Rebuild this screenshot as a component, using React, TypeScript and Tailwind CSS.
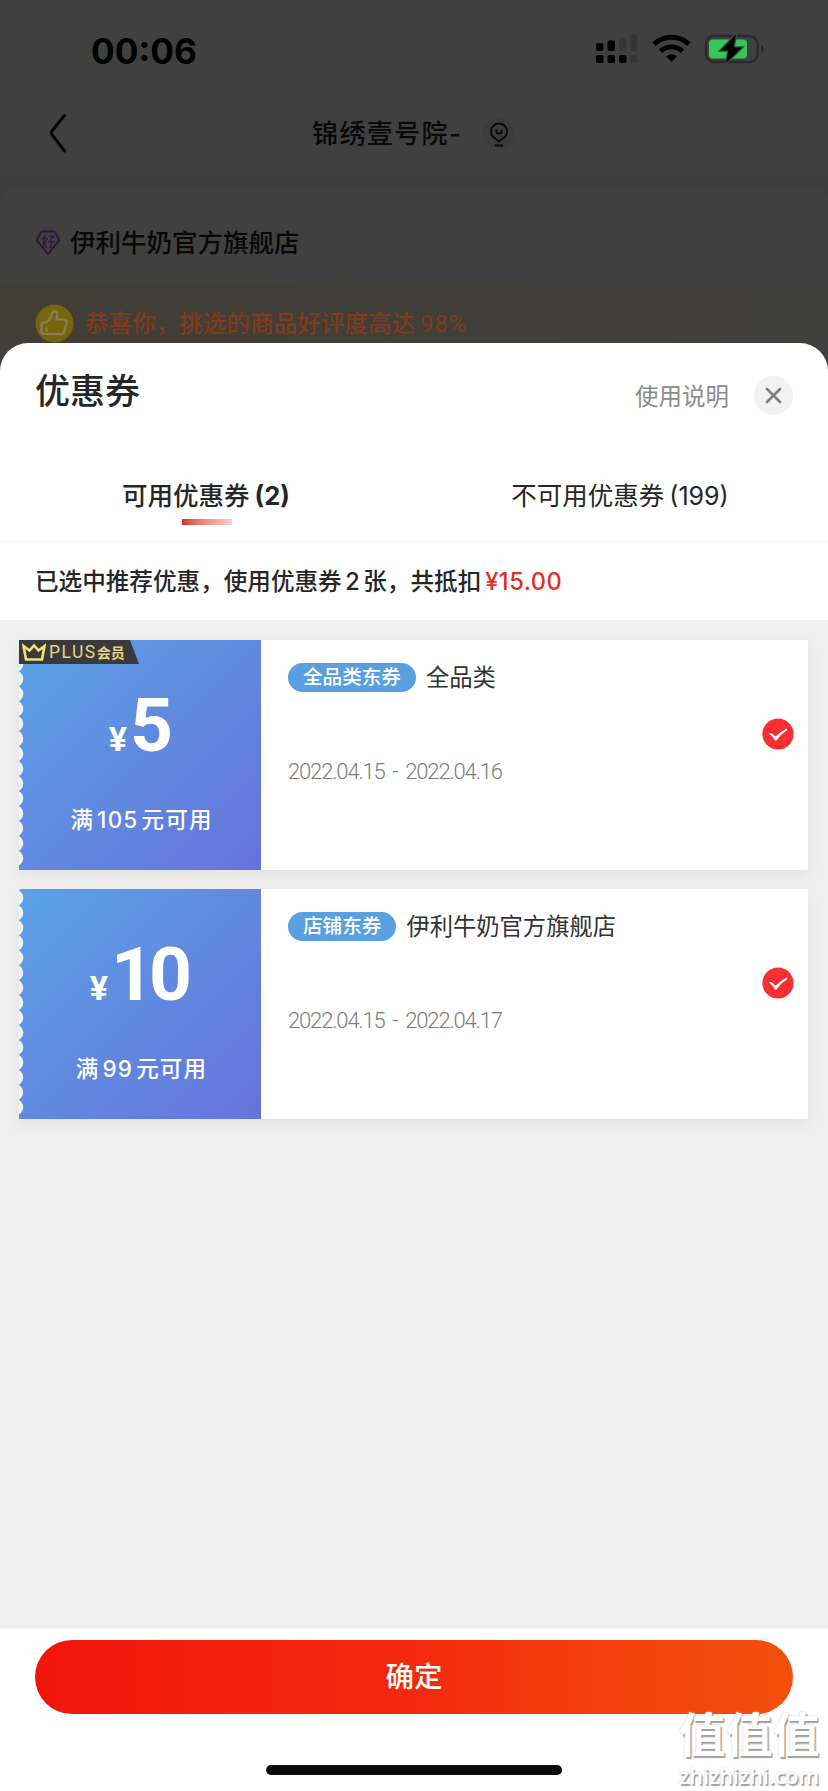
import type { ReactNode } from "react"
import { clsx } from "clsx"

interface Coupon {
  amount: number
  condition: [string, number, string]
  tag: string
  scope: string
  period: string
  plus?: boolean
}

const coupons: Coupon[] = [
  {
    amount: 5,
    condition: ["满", 105, "元可用"],
    tag: "全品类东券",
    scope: "全品类",
    period: "2022.04.15 - 2022.04.16",
    plus: true,
  },
  {
    amount: 10,
    condition: ["满", 99, "元可用"],
    tag: "店铺东券",
    scope: "伊利牛奶官方旗舰店",
    period: "2022.04.15 - 2022.04.17",
  },
]

const notches = Array.from({ length: 16 }, (_, i) => -6 + i * 14.95)

function StatusIcons() {
  return (
    <svg width="172" height="32" viewBox="0 0 172 32">
      {/* dual sim signal */}
      <g fill="#000">
        <rect x="1" y="11" width="7.5" height="8" rx="2" />
        <rect x="12.5" y="8.5" width="7.5" height="10.5" rx="2" />
        <rect x="1" y="23" width="7.5" height="8" rx="2" />
        <rect x="12.5" y="23" width="7.5" height="8" rx="2" />
        <rect x="24" y="23" width="7.5" height="8" rx="2" />
      </g>
      <g fill="#353535">
        <rect x="24" y="5" width="7" height="14" rx="2" />
        <rect x="35.5" y="2" width="7" height="17" rx="2" />
        <rect x="35.5" y="23" width="7" height="8" rx="2" />
      </g>
      <g fill="none" stroke="#000">
        <path d="M59 12.3 C68.500 3 84.500 3 94 12.3" strokeWidth="5" />
        <path d="M65.500 19.300 C72 13.500 81 13.500 87.500 19.300" strokeWidth="4.8" />
      </g>
      <path d="M71 24.500 Q76.500 20 82 24.500 L76.500 30 Z" fill="#000" />
      <rect x="111" y="4" width="51.5" height="26" rx="8" fill="none" stroke="#2a2a2a" strokeWidth="2.4" />
      <rect x="114" y="7.5" width="38" height="19" rx="4" fill="#36c759" />
      <path d="M166 13 Q169 13.500 169 17 Q169 20.500 166 21 Z" fill="#2a2a2a" />
      <path
        d="M141 2.500 L125.500 18.500 H133.500 L131 31 L147 15.500 H138.500 Z"
        fill="#000"
        stroke="#2c5236"
        strokeWidth="2.5"
        paintOrder="stroke"
      />
    </svg>
  )
}

function PageBehind() {
  return (
    <div className="h-[343px] shrink-0 bg-[#404040]">
      <div className="flex h-[100px] items-start justify-between pr-[61px] pl-[91px]">
        <span className="mt-[29px] text-[35.2px] leading-[44px] font-bold text-black">00:06</span>
        <div className="mt-[32px]">
          <StatusIcons />
        </div>
      </div>

      <div className="flex h-[76px] items-start pl-[48px]">
        <svg className="mt-[12px]" width="20" height="42" viewBox="0 0 20 42">
          <path
            d="M16.500 3.500 L3.500 19.500 Q2.800 21 3.500 22 L16.500 39"
            fill="none"
            stroke="#060606"
            strokeWidth="3"
            strokeLinecap="round"
          />
        </svg>
        <span className="mt-[14px] ml-[244px] text-[26px] leading-[40px] font-medium tracking-[1.4px] text-[#080808]">
          锦绣壹号院-
        </span>
        <div className="mt-[18px] ml-[21px] flex size-[32px] items-center justify-center rounded-full bg-[#3c3c3c]">
          <svg
            width="20"
            height="26"
            viewBox="0 0 20 26"
            fill="none"
            stroke="#080808"
            strokeWidth="1.8"
            strokeLinecap="round"
          >
            <path d="M10 20.500 L4 15.800 A8 8 0 1 1 16 15.800 Z" strokeLinejoin="round" />
            <path d="M7.300 9.500 V10 A2.700 2.700 0 0 0 12.700 10 V9.500" />
            <path d="M6.500 24.500 H13.500" />
          </svg>
        </div>
      </div>

      <div className="bg-[#3d3d3d] pt-[11px]">
        <div className="rounded-t-[18px] bg-[#404040]">
          <div className="flex h-[97px] items-center pt-[14px] pl-[35px]">
            <svg width="26" height="28" viewBox="0 0 26 28" fill="none" stroke="#2b1740" strokeWidth="1.9">
              <path d="M6.500 2.500 H19.500 L24.500 11 L13 25 L1.500 11 Z" strokeLinejoin="round" />
              <path
                d="M10 6 L8 15 L12 19 M7 9.500 H12 L8 19 M14 7.500 H19 L16 10.500 V19 L14.500 18 M13 13 H20"
                strokeWidth="1.3"
              />
            </svg>
            <span className="ml-[9px] text-[25.5px] leading-[36px] font-medium text-[#080808]">
              伊利牛奶官方旗舰店
            </span>
          </div>
          <div className="flex h-[59px] items-start bg-linear-to-r from-[#403e35] to-[#40403e] pt-[20px] pl-[35px]">
            <svg width="39" height="39" viewBox="0 0 39 39">
              <circle cx="19.5" cy="19.5" r="19" fill="#76650a" />
              <path
                d="M8 18.500 H11 Q16 15 17.500 8 Q21.500 6 22.500 10 L21.500 15.500 H29.500 Q32.500 16.500 31.500 19.500 L29 28 Q28.500 30 25.500 30 H8 Q6.500 30 6.500 28 V20.500 Q6.500 18.500 8 18.500 Z M11.500 24 V27"
                fill="none"
                stroke="#87815c"
                strokeWidth="2.2"
                strokeLinecap="round"
              />
            </svg>
            <span className="mt-[2px] ml-[11px] font-['Roboto','Noto_Sans_CJK_SC',sans-serif] text-[23.6px] leading-[36px] font-medium text-[#7f3b1c]">
              恭喜你，挑选的商品好评度高达
              <span className="ml-[5px] font-normal tracking-[0.9px]">98%</span>
            </span>
          </div>
        </div>
      </div>
    </div>
  )
}

function Tab({ label, count, active }: { label: string; count: number; active?: boolean }) {
  return (
    <div className="flex flex-1 flex-col items-center">
      <span
        className={clsx(
          "mt-px text-[25.5px] leading-[36px] whitespace-nowrap text-[#262626]",
          active ? "-ml-[2px] font-medium" : "-ml-[2px] font-normal"
        )}
      >
        {label}
        <span className={clsx("ml-[5px]", active ? "font-bold" : "text-[25px]")}>({count})</span>
      </span>
      {active && (
        <div className="mt-[5px] h-[6px] w-[50px] bg-linear-to-r from-[#d9301f] via-[#e5786e] via-30% to-[#f6cdc9]" />
      )}
    </div>
  )
}

function PlusTag() {
  return (
    <div className="absolute top-0 left-0 flex h-[24px] w-[120px] items-center bg-[#3a3a3a] pl-[3px] text-[#e3d48a] [clip-path:polygon(0_0,111px_0,120px_100%,0_100%)]">
      <svg width="24" height="19" viewBox="0 0 24 19" fill="none" stroke="#f3e37c" strokeWidth="2.6">
        <path d="M1.500 3 L7.500 7.500 L12 2.500 L16.500 7.500 L22.500 3 L20 16.500 H4 Z" />
      </svg>
      <span className="ml-[3px] font-['Roboto',sans-serif] text-[17.5px] tracking-[1.5px]">PLUS</span>
      <span className="text-[14px] font-bold">会员</span>
    </div>
  )
}

function CheckMark() {
  return (
    <svg width="32" height="32" viewBox="0 0 32 32">
      <circle cx="16" cy="16" r="15.6" fill="#fa2f32" />
      <path
        d="M7 15.500 Q9 14.500 10.500 16 L13.500 18.500 Q18 14 24.500 10.500 Q25.500 11 25 12.500 Q19 16 14.500 22.500 H13 Q10.500 18 7 15.500 Z"
        fill="#fff"
      />
    </svg>
  )
}

function CouponCard({ coupon }: { coupon: Coupon }) {
  const [before, threshold, after] = coupon.condition
  return (
    <div className="relative flex h-[230px] bg-white shadow-[0_6px_16px_rgba(0,0,0,0.06)]">
      <div className="relative flex w-[242px] flex-col items-center overflow-hidden bg-linear-135 from-[#59a3e4] via-[#6189e0] to-[#6673dc] text-white">
        <svg className="absolute top-0 left-0" width="6" height="230">
          {notches.map((cy) => (
            <circle key={cy} cx="-4" cy={cy} r="8.3" fill="#f0f3f5" />
          ))}
        </svg>
        <div className="mt-[41px] -ml-[3px] flex h-[88px] items-baseline font-['Roboto',sans-serif] font-bold">
          <span className="text-[34px]">¥</span>
          <span className="ml-[3px] text-[75px] leading-[88px] tracking-[-5px]">{coupon.amount}</span>
        </div>
        <div className="mt-[33px] ml-[3px] flex items-center text-[22.5px] leading-[36px] font-medium tracking-[1.2px]">
          {before}
          <span className="mx-[3px]">{threshold}</span>
          {after}
        </div>
      </div>
      <div className="flex flex-1 items-center pr-[14px] pl-[27px]">
        <div className="flex-1 self-stretch pt-[20px]">
          <div className="flex items-start">
            <span className="mt-[3px] flex h-[29px] items-center rounded-full bg-[#5a9fdf] px-[15px] text-[19.6px] leading-[29px] font-medium text-white">
              {coupon.tag}
            </span>
            <span className="mt-px ml-[10px] text-[23.3px] leading-[34px] text-[#333]">{coupon.scope}</span>
          </div>
          <div className="mt-[60px] font-['Roboto',sans-serif] text-[22px] leading-[34px] font-light tracking-[-1.15px] text-[#7d7d7d] [word-spacing:3.5px]">
            {coupon.period}
          </div>
        </div>
        <div className="-mt-[42px]">
          <CheckMark />
        </div>
      </div>
      {coupon.plus && <PlusTag />}
    </div>
  )
}

function Sheet({ children }: { children: ReactNode }) {
  return (
    <div className="bg-[#404040]">
      <div className="flex h-[1448px] flex-col rounded-t-[28px] bg-white">{children}</div>
    </div>
  )
}

export default function App() {
  return (
    <div
      lang="zh-CN"
      className="relative flex h-[1791px] w-[828px] flex-col overflow-hidden font-['Inter','Noto_Sans_CJK_SC',sans-serif]"
    >
      <PageBehind />
      <Sheet>
        <div className="flex h-[134px] items-start pr-[35px] pl-[35px]">
          <h2 className="mt-[22px] text-[35px] leading-[52px] font-medium text-[#262626]">优惠券</h2>
          <span className="mt-[37px] ml-auto text-[23.5px] leading-[34px] text-[#8c8c8c]">使用说明</span>
          <div className="mt-[33px] ml-[25px] flex size-[39px] items-center justify-center rounded-full bg-[#f2f2f2]">
            <svg
              width="17"
              height="17"
              viewBox="0 0 17 17"
              stroke="#808080"
              strokeWidth="2.7"
              strokeLinecap="round"
            >
              <path d="M2 2 L15 15 M15 2 L2 15" />
            </svg>
          </div>
        </div>

        <div className="flex h-[65px] shrink-0 border-b border-[#f5f5f5]">
          <Tab label="可用优惠券" count={2} active />
          <Tab label="不可用优惠券" count={199} />
        </div>

        <div className="flex h-[78px] shrink-0 items-center pt-[2px] pl-[35px] text-[23.6px] font-medium text-[#262626]">
          已选中推荐优惠，使用优惠券<span className="mx-[3.5px]">2</span>张，共抵扣
          <span className="ml-[4px] tracking-[0.5px] text-[#e1301f]">¥15.00</span>
        </div>

        <div className="flex flex-1 flex-col gap-[19px] bg-[#f0f0f0] pt-[20px] pr-[20px] pl-[19px]">
          {coupons.map((coupon) => (
            <CouponCard key={coupon.tag} coupon={coupon} />
          ))}
        </div>

        <div className="flex h-[162px] shrink-0 flex-col items-center bg-white px-[35px] pt-[11px]">
          <button className="h-[74px] w-full rounded-full bg-linear-to-r from-[#f2140c] via-[#f4280e] to-[#f2500c] text-[28.5px] font-medium text-white">
            确定
          </button>
          <div className="mt-[51px] h-[10px] w-[296px] rounded-full bg-[#0b0b0b]" />
        </div>
      </Sheet>

      {/* watermark */}
      <div className="absolute right-[7px] bottom-[2px] flex w-[144px] flex-col items-center text-white [text-shadow:1.5px_1.5px_1px_#a0a0a0,0_0_2px_#c8c8c8]">
        <span className="text-[47px] leading-[48px] font-bold">值值值</span>
        <span className="mt-[3px] font-['Open_Sans',sans-serif] text-[21.5px] leading-[27px] font-semibold">
          zhizhizhi.com
        </span>
      </div>
    </div>
  )
}
